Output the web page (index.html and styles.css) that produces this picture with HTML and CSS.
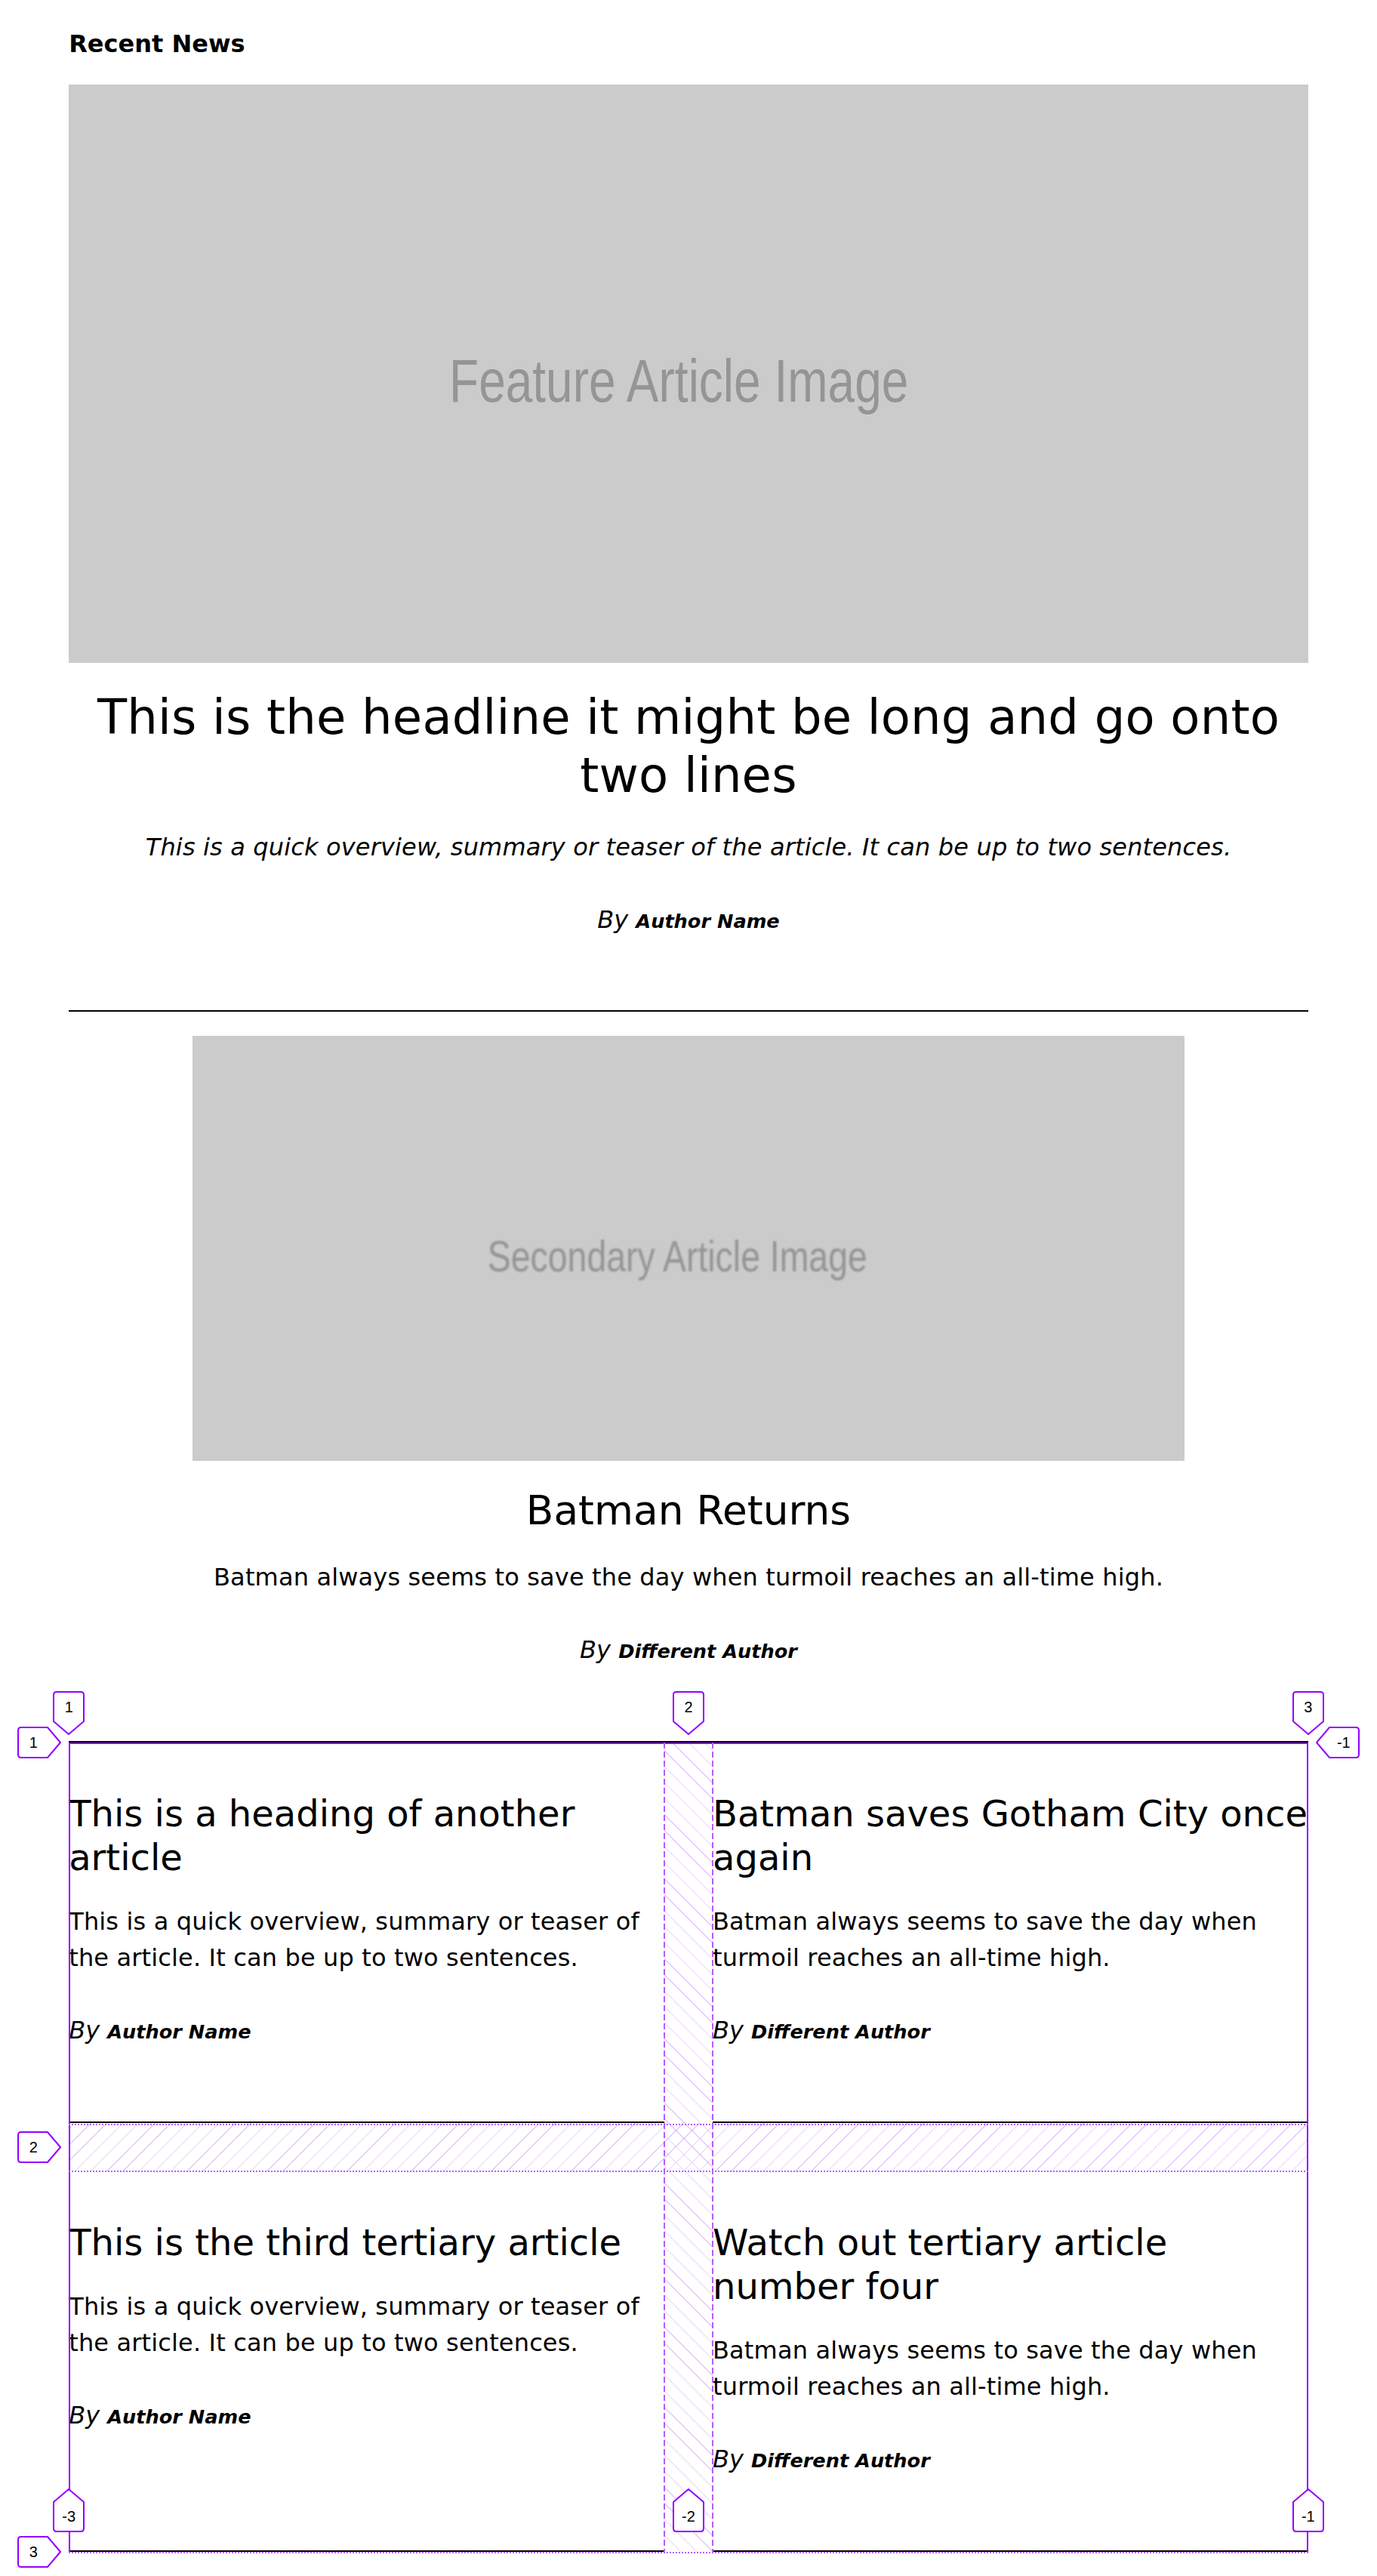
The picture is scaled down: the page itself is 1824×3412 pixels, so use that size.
FILE: index.html
```html
<!DOCTYPE html>
<html lang="en">
<head>
<meta charset="utf-8">
<title>Recent News</title>
<link rel="stylesheet" href="styles.css">
</head>
<body>
<main class="page">
  <h2 class="section-title">Recent News</h2>

  <article class="feature">
    <div class="ph ph-feature"><span class="ph-text">Feature Article Image</span></div>
    <h1 class="feature-headline">This is the headline it might be long and go onto two lines</h1>
    <p class="teaser teaser-italic">This is a quick overview, summary or teaser of the article. It can be up to two sentences.</p>
    <p class="byline">By <span class="author">Author Name</span></p>
  </article>

  <article class="secondary">
    <div class="ph ph-secondary"><span class="ph-text">Secondary Article Image</span></div>
    <h2 class="secondary-headline">Batman Returns</h2>
    <p class="teaser">Batman always seems to save the day when turmoil reaches an all-time high.</p>
    <p class="byline">By <span class="author">Different Author</span></p>
  </article>

  <section class="tertiary-grid">
    <article class="tertiary">
      <h3 class="tertiary-headline">This is a heading of another article</h3>
      <p class="teaser">This is a quick overview, summary or teaser of the article. It can be up to two sentences.</p>
      <p class="byline">By <span class="author">Author Name</span></p>
    </article>
    <article class="tertiary">
      <h3 class="tertiary-headline">Batman saves Gotham City once again</h3>
      <p class="teaser">Batman always seems to save the day when turmoil reaches an all-time high.</p>
      <p class="byline">By <span class="author">Different Author</span></p>
    </article>
    <article class="tertiary">
      <h3 class="tertiary-headline">This is the third tertiary article</h3>
      <p class="teaser">This is a quick overview, summary or teaser of the article. It can be up to two sentences.</p>
      <p class="byline">By <span class="author">Author Name</span></p>
    </article>
    <article class="tertiary">
      <h3 class="tertiary-headline">Watch out tertiary article number four</h3>
      <p class="teaser">Batman always seems to save the day when turmoil reaches an all-time high.</p>
      <p class="byline">By <span class="author">Different Author</span></p>
    </article>

    <div class="grid-overlay" aria-hidden="true">
      <div class="ov-outline"></div>
      <div class="ov-bottom"></div>
      <div class="ov-colgap"></div>
      <div class="ov-rowgap"></div>
      <div class="ov-dash ov-dash-a"></div>
      <div class="ov-dash ov-dash-b"></div>
      <div class="ov-dot ov-dot-a"></div>
      <div class="ov-dot ov-dot-b"></div>

      <div class="badge badge-down b-c1"><svg width="42" height="58" viewBox="0 0 42 58"><path d="M5 1H37Q41 1 41 5V40L21 57L1 40V5Q1 1 5 1Z"/></svg><span>1</span></div>
      <div class="badge badge-down b-c2"><svg width="42" height="58" viewBox="0 0 42 58"><path d="M5 1H37Q41 1 41 5V40L21 57L1 40V5Q1 1 5 1Z"/></svg><span>2</span></div>
      <div class="badge badge-down b-c3"><svg width="42" height="58" viewBox="0 0 42 58"><path d="M5 1H37Q41 1 41 5V40L21 57L1 40V5Q1 1 5 1Z"/></svg><span>3</span></div>

      <div class="badge badge-up b-c1 b-bottom"><svg width="42" height="58" viewBox="0 0 42 58"><path d="M5 57H37Q41 57 41 53V18L21 1L1 18V53Q1 57 5 57Z"/></svg><span>-3</span></div>
      <div class="badge badge-up b-c2 b-bottom"><svg width="42" height="58" viewBox="0 0 42 58"><path d="M5 57H37Q41 57 41 53V18L21 1L1 18V53Q1 57 5 57Z"/></svg><span>-2</span></div>
      <div class="badge badge-up b-c3 b-bottom"><svg width="42" height="58" viewBox="0 0 42 58"><path d="M5 57H37Q41 57 41 53V18L21 1L1 18V53Q1 57 5 57Z"/></svg><span>-1</span></div>

      <div class="badge badge-right b-r1"><svg width="58" height="42" viewBox="0 0 58 42"><path d="M1 5Q1 1 5 1H40L57 21L40 41H5Q1 41 1 37Z"/></svg><span>1</span></div>
      <div class="badge badge-right b-r2"><svg width="58" height="42" viewBox="0 0 58 42"><path d="M1 5Q1 1 5 1H40L57 21L40 41H5Q1 41 1 37Z"/></svg><span>2</span></div>
      <div class="badge badge-right b-r3"><svg width="58" height="42" viewBox="0 0 58 42"><path d="M1 5Q1 1 5 1H40L57 21L40 41H5Q1 41 1 37Z"/></svg><span>3</span></div>

      <div class="badge badge-left b-rr1"><svg width="58" height="42" viewBox="0 0 58 42"><path d="M57 5Q57 1 53 1H18L1 21L18 41H53Q57 41 57 37Z"/></svg><span>-1</span></div>
    </div>
  </section>
</main>
</body>
</html>
```

FILE: styles.css
```css
html, body {
  margin: 0;
  padding: 0;
  background: #ffffff;
}

body {
  color: #000000;
  font-family: "DejaVu Sans", Verdana, sans-serif;
  font-size: 32px;
}

.page {
  width: 90%;
  margin: 0 auto;
  padding: 40px 0 30px;
}

.section-title {
  margin: 0 0 35px;
  font-size: 32px;
  line-height: 37px;
  font-weight: bold;
}

/* placeholder images */
.ph {
  display: flex;
  align-items: center;
  justify-content: center;
  background: #cbcbcb;
  overflow: hidden;
}

.ph-feature {
  width: 100%;
  height: 766px;
}

.ph-secondary {
  width: 80%;
  height: 563px;
  margin: 32px auto 0;
}

.ph-text {
  font-family: "Liberation Sans", Arial, sans-serif;
  color: #959595;
  white-space: nowrap;
  filter: blur(0.7px);
}

.ph-feature .ph-text {
  font-size: 80px;
  transform: translate(-13px, 10px) scaleX(0.8);
}

.ph-secondary .ph-text {
  font-size: 58px;
  transform: translate(-15px, 10px) scaleX(0.8);
  filter: blur(1.1px);
}

/* articles */
.feature,
.secondary {
  text-align: center;
  border-bottom: 2px solid #000;
}

.feature {
  padding-bottom: 96px;
}

.secondary {
  padding-bottom: 97px;
}

.feature-headline {
  margin: 34px 0 32px;
  font-size: 64px;
  line-height: 77px;
  font-weight: normal;
  letter-spacing: 0.18px;
}

.secondary-headline {
  margin: 34px 0 32px;
  font-size: 53.33px;
  line-height: 64px;
  font-weight: normal;
}

.teaser {
  margin: 0;
  font-size: 32px;
  line-height: 48px;
  letter-spacing: 0.15px;
}

.teaser-italic {
  font-style: italic;
}

.byline {
  margin: 48px 0 0;
  font-size: 32px;
  line-height: 48px;
  font-style: italic;
}

.author {
  font-size: 0.8em;
  font-weight: bold;
  line-height: 1;
}

/* tertiary grid */
.tertiary-grid {
  position: relative;
  display: grid;
  grid-template-columns: 1fr 1fr;
  gap: 64px;
}

.tertiary {
  padding: 65px 0 97px;
  border-bottom: 2px solid #000;
}

.tertiary-headline {
  margin: 0 0 32px;
  font-size: 48px;
  line-height: 58px;
  font-weight: normal;
}

/* grid inspector overlay */
.grid-overlay {
  position: absolute;
  inset: 0;
  pointer-events: none;
}

.ov-outline {
  position: absolute;
  inset: 0;
  border: 2px solid #9400ff;
  border-bottom: none;
}

.ov-bottom {
  position: absolute;
  left: 0;
  right: 0;
  bottom: -2px;
  height: 2px;
  background: repeating-linear-gradient(to right, #b45cff 0 2px, transparent 2px 4px);
}

.ov-colgap {
  position: absolute;
  top: 0;
  bottom: 0;
  left: calc(50% - 32px);
  width: 64px;
  background: repeating-linear-gradient(45deg, rgba(148, 0, 255, 0.22) 0 1px, transparent 1px 15px);
}

.ov-rowgap {
  position: absolute;
  left: 0;
  right: 0;
  top: calc(50% - 32px);
  height: 64px;
  background: repeating-linear-gradient(-45deg, rgba(148, 0, 255, 0.22) 0 1px, transparent 1px 15px);
}

.ov-dash {
  position: absolute;
  top: 0;
  bottom: 0;
  width: 2px;
  background: repeating-linear-gradient(to bottom, #b45cff 0 8px, transparent 8px 12px);
}

.ov-dash-a {
  left: calc(50% - 33px);
}

.ov-dash-b {
  left: calc(50% + 31px);
}

.ov-dot {
  position: absolute;
  left: 0;
  right: 0;
  height: 2px;
  background: repeating-linear-gradient(to right, #b45cff 0 2px, transparent 2px 4px);
}

.ov-dot-a {
  top: calc(50% - 31px);
}

.ov-dot-b {
  top: calc(50% + 31px);
}

.badge {
  position: absolute;
}

.badge svg {
  display: block;
}

.badge path {
  fill: #ffffff;
  stroke: #9400ff;
  stroke-width: 2;
  stroke-linejoin: round;
}

.badge span {
  position: absolute;
  width: 40px;
  height: 40px;
  display: flex;
  align-items: center;
  justify-content: center;
  font-family: "Liberation Sans", Arial, sans-serif;
  font-size: 20px;
  color: #000;
}

.badge-down span { left: 1px; top: 1px; }
.badge-up span { left: 1px; top: 17px; }
.badge-right span { left: 1px; top: 1px; }
.badge-left span { left: 17px; top: 1px; }

.badge-down { top: -68px; }
.b-bottom { top: auto; bottom: 26px; }

.b-c1 { left: -21px; }
.b-c2 { left: calc(50% - 21px); }
.b-c3 { left: calc(100% - 21px); }

.badge-right { left: -68px; }
.b-r1 { top: -21px; }
.b-r2 { top: calc(50% - 21px); }
.b-r3 { top: calc(100% - 21px); }

.b-rr1 { left: calc(100% + 10px); top: -21px; }
```
